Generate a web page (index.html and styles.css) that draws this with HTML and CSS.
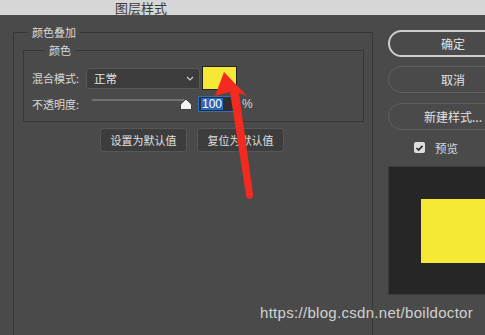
FILE: index.html
```html
<!DOCTYPE html>
<html lang="zh">
<head>
<meta charset="utf-8">
<link rel="stylesheet" href="styles.css">
</head>
<body>
<div class="titlebar"><span class="title">图层样式</span></div>
<div class="main">
  <div class="left">
    <fieldset class="group outer">
      <legend>颜色叠加</legend>
      <fieldset class="group inner">
        <legend>颜色</legend>
        <div class="row row-blend">
          <span class="label label-blend">混合模式:</span>
          <div class="select"><span>正常</span>
            <svg class="chev" width="8" height="5" viewBox="0 0 8 5"><path d="M1 1 L4 4 L7 1" fill="none" stroke="#cfcfcf" stroke-width="1.1"/></svg>
          </div>
          <div class="swatch"></div>
        </div>
        <div class="row row-opacity">
          <span class="label label-opacity">不透明度:</span>
          <div class="slider">
            <div class="track"></div>
            <svg class="thumb" width="12" height="11" viewBox="0 0 12 11"><path d="M0.5 10.5 V6.5 Q0.5 5.5 1.5 4.5 L5 1 Q6 0 7 1 L10.5 4.5 Q11.5 5.5 11.5 6.5 V10.5 Z" fill="#f2f2f2" stroke="#2a2a2a" stroke-width="0.8"/></svg>
          </div>
          <div class="num"><span class="sel">100</span></div>
          <span class="pct">%</span>
        </div>
      </fieldset>
      <div class="btn-row">
        <button class="btn">设置为默认值</button>
        <button class="btn">复位为默认值</button>
      </div>
    </fieldset>
  </div>
  <div class="right">
    <button class="pill pill-default">确定</button>
    <button class="pill">取消</button>
    <button class="pill">新建样式...</button>
    <div class="preview-row">
      <span class="check"><svg width="9" height="8" viewBox="0 0 9 8"><path d="M1.5 4 L3.6 6 L7.5 1.8" fill="none" stroke="#2b2b2b" stroke-width="1.7"/></svg></span>
      <span class="preview-label">预览</span>
    </div>
    <div class="preview"><div class="preview-fill"></div></div>
  </div>
</div>
<svg class="arrow" width="485" height="335" viewBox="0 0 485 335">
  <path d="M224 72 L247 96 L239 93 L253 194 Q253 199 249.5 199 Q246.5 199 246 195 L230 92 L215 96 Z" fill="#f22a1f"/>
</svg>
<div class="watermark">https://blog.csdn.net/boildoctor</div>
</body>
</html>
```
FILE: styles.css
```css
html, body {
  margin: 0;
  padding: 0;
}
body {
  width: 485px;
  height: 335px;
  overflow: hidden;
  position: relative;
  background: #4a4a4a;
  font-family: "Noto Sans CJK SC", "Noto Sans", sans-serif;
  font-size: 11px;
  color: #d8d8d8;
}
.titlebar {
  height: 15px;
  background: #d6d6d6;
  text-align: center;
  overflow: hidden;
  padding-right: 203px;
}
.title {
  display: inline-block;
  font-size: 13px;
  line-height: 13px;
  margin-top: -7px;
  color: #3a3a3a;
}
.main {
  display: flex;
}
.left {
  flex: none;
  width: 388px;
  box-sizing: border-box;
  padding: 11px 0 0 13px;
}
.group {
  margin: 0;
  padding: 0;
  border: 1px solid #363636;
  min-inline-size: 0;
}
.group legend {
  padding: 0 4px;
  line-height: 13px;
  font-size: 11px;
  color: #dadada;
}
.outer {
  width: 360px;
  height: 420px;
  box-sizing: border-box;
}
.outer > legend {
  margin-left: 14px;
}
.inner {
  margin: 5px 0 0 9px;
  width: 341px;
  box-sizing: border-box;
  padding: 9px 0 9px 8px;
}
.inner > legend {
  margin-left: 13px;
}
.row {
  display: flex;
}
.row-blend {
  align-items: center;
  height: 24px;
}
.row-opacity {
  margin-top: 6px;
  height: 16px;
  align-items: flex-start;
}
.label-blend {
  width: 54px;
  line-height: 16px;
}
.label-opacity {
  width: 60px;
  line-height: 16px;
}
.select {
  width: 114px;
  height: 21px;
  box-sizing: border-box;
  border: 1px solid #585858;
  border-radius: 3px;
  background: #3c3c3c;
  display: flex;
  align-items: center;
  justify-content: space-between;
  padding: 0 5px 0 7px;
  color: #e2e2e2;
  font-size: 11.5px;
}
.chev {
  display: block;
}
.swatch {
  margin-left: 2px;
  width: 35px;
  height: 24px;
  box-sizing: border-box;
  border: 1px solid #222;
  background: #f5e936;
}
.slider {
  display: flex;
  align-items: flex-start;
  width: 100px;
}
.track {
  width: 93px;
  height: 2px;
  margin-top: 3px;
  background: #707070;
}
.thumb {
  display: block;
  margin: 3px 0 0 -5px;
}
.num {
  margin-left: 6px;
  width: 40px;
  height: 16px;
  box-sizing: border-box;
  border: 1px solid #2f6cc4;
  background: #2e2e2e;
  display: flex;
  align-items: center;
  padding-left: 2px;
}
.sel {
  background: #2d66b3;
  color: #ffffff;
  font-family: "Liberation Sans", Arial, sans-serif;
  font-size: 12px;
  line-height: 12px;
  padding: 0 1px;
}
.pct {
  margin-left: 4px;
  line-height: 16px;
  font-family: "Liberation Sans", Arial, sans-serif;
  font-size: 12px;
}
.btn-row {
  display: flex;
  gap: 10px;
  margin: 6px 0 0 86px;
}
.btn {
  width: 87px;
  height: 24px;
  box-sizing: border-box;
  border: 1px solid #575757;
  border-radius: 3px;
  background: #3d3d3d;
  color: #e0e0e0;
  font-family: "Noto Sans CJK SC", sans-serif;
  font-size: 11px;
  padding: 0;
}
.right {
  flex: none;
  width: 130px;
  padding-top: 15px;
  display: flex;
  flex-direction: column;
}
.pill {
  width: 130px;
  height: 27px;
  box-sizing: border-box;
  border: 1px solid #606060;
  border-radius: 14px;
  background: transparent;
  color: #e2e2e2;
  font-family: "Noto Sans CJK SC", sans-serif;
  font-size: 12px;
  padding: 0;
  margin-bottom: 10px;
}
.pill-default {
  border: 2px solid #cdcdcd;
  margin-bottom: 9px;
}
.preview-row {
  margin-top: 2px;
  display: flex;
  align-items: center;
  height: 11px;
  padding-left: 26px;
}
.check {
  width: 11px;
  height: 11px;
  box-sizing: border-box;
  border-radius: 2px;
  background: #dedede;
  display: flex;
  align-items: center;
  justify-content: center;
}
.check svg {
  display: block;
}
.preview-label {
  margin-left: 10px;
  font-size: 11.5px;
  color: #dadada;
}
.preview {
  margin-top: 13px;
  width: 130px;
  height: 129px;
  box-sizing: border-box;
  background: #262626;
  border: 1px solid #3b3b3b;
  padding: 32px 0 0 32px;
}
.preview-fill {
  width: 120px;
  height: 64px;
  background: #f5e936;
}
.arrow {
  position: absolute;
  left: 0;
  top: 0;
  pointer-events: none;
}
.watermark {
  position: absolute;
  left: 260px;
  top: 305px;
  font-family: "Liberation Sans", Arial, sans-serif;
  font-size: 15px;
  letter-spacing: 0.3px;
  line-height: 16px;
  color: #d2d2d2;
}
```
